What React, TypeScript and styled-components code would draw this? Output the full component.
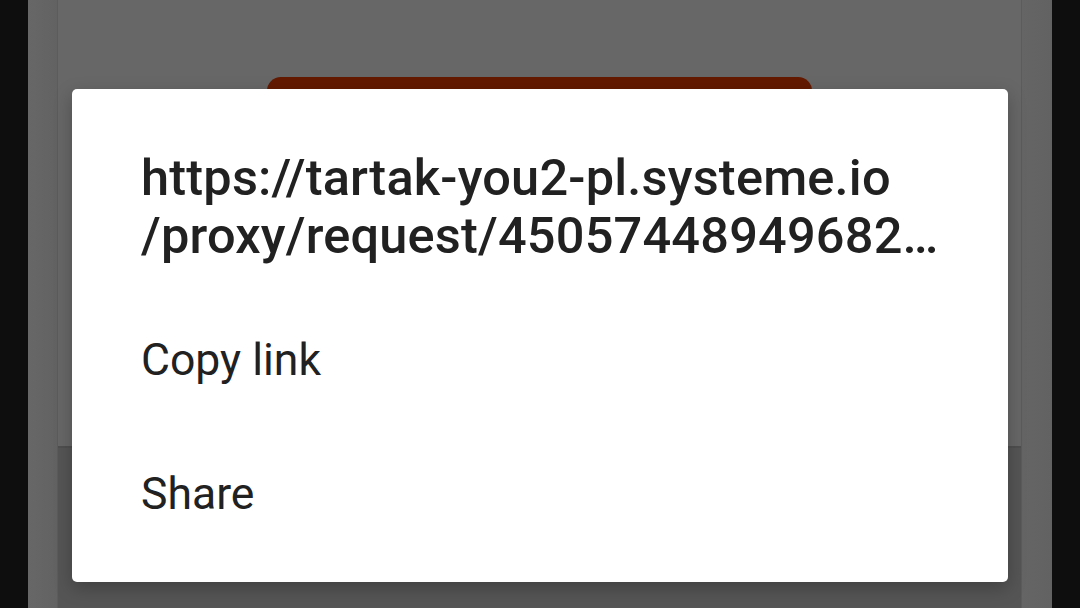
import styled, { createGlobalStyle } from 'styled-components';

const GlobalStyle = createGlobalStyle`
	html, body {
		margin: 0;
		padding: 0;
		background: #0e0e0e;
	}
	body {
		font-family: Roboto, 'Noto Sans', sans-serif;
	}
`;

const Screen = styled.div`
	position: relative;
	width: 1080px;
	height: 608px;
	overflow: hidden;
	display: flex;
	justify-content: center;
	background: #0e0e0e;
`;

const Column = styled.div`
	width: 1024px;
	height: 100%;
	display: flex;
	padding: 0 30px 0 29px;
	box-sizing: border-box;
	background: linear-gradient(90deg, #676767 0%, #626262 3%, #656565 97%, #626262 100%);
`;

const Panel = styled.div`
	flex: 1;
	display: flex;
	flex-direction: column;
	border-left: 1px solid #5c5c5c;
	border-right: 1px solid #5c5c5c;
`;

const TopSection = styled.section`
	height: 446px;
	padding: 77px 0 0 209px;
	box-sizing: border-box;
	background: #676767;
`;

const RedButton = styled.div`
	width: 545px;
	height: 80px;
	border-radius: 14px;
	background: #631a00;
`;

const BottomSection = styled.section`
	flex: 1;
	border-top: 2px solid #4f4f4f;
	background: #555555;
`;

const Dialog = styled.div`
	position: absolute;
	left: 72px;
	top: 89px;
	width: 936px;
	height: 493px;
	box-sizing: border-box;
	background: #ffffff;
	border-radius: 5px;
	box-shadow: 0 6px 18px rgba(0, 0, 0, 0.25);
	padding: 60px 69px 0;
	color: #212121;
`;

const Title = styled.h2`
	margin: 0;
	font-size: 50.5px;
	font-weight: 500;
	line-height: 58px;
	letter-spacing: 0.2px;
`;

const TitleLine = styled.div`
	white-space: nowrap;
	overflow: hidden;
`;

const Menu = styled.ul`
	list-style: none;
	margin: 28px 0 0;
	padding: 0;
`;

const Item = styled.li`
	height: 134px;
	display: flex;
	align-items: center;
	font-size: 44.5px;
	font-weight: 400;
`;

export default function App() {
	return (
		<>
			<GlobalStyle />
			<Screen>
				<Column>
					<Panel>
						<TopSection>
							<RedButton />
						</TopSection>
						<BottomSection />
					</Panel>
				</Column>
				<Dialog>
					<Title>
						<TitleLine>https://tartak-you2-pl.systeme.io</TitleLine>
						<TitleLine>/proxy/request/45057448949682…</TitleLine>
					</Title>
					<Menu>
						<Item>Copy link</Item>
						<Item>Share</Item>
					</Menu>
				</Dialog>
			</Screen>
		</>
	);
}
